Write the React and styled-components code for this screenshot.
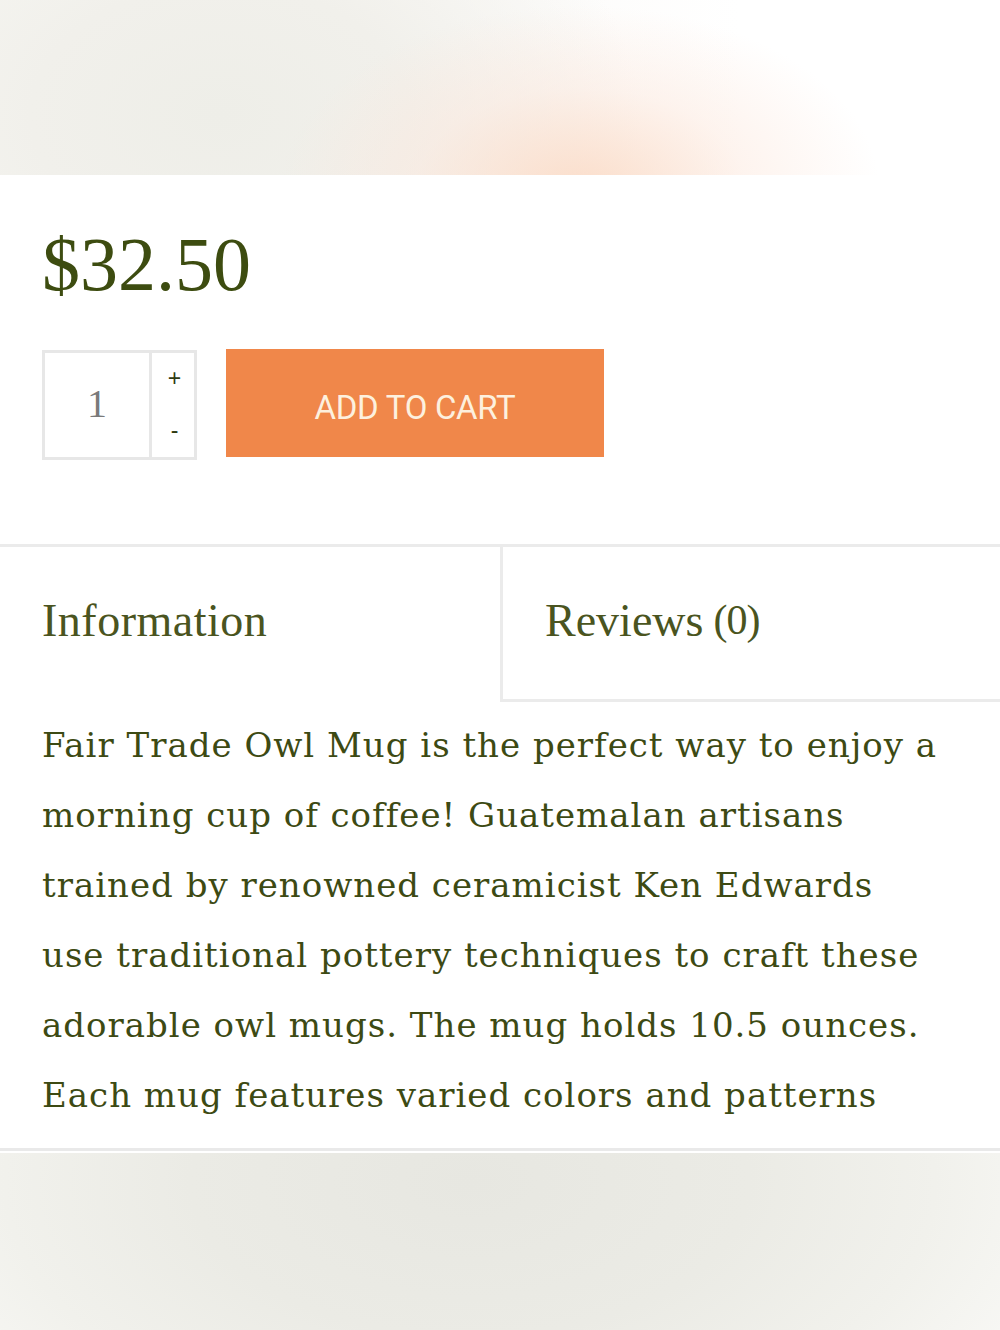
import React from "react";
import styled, { createGlobalStyle } from "styled-components";

const Global = createGlobalStyle`
  html, body { margin: 0; padding: 0; background: #fff; }
  body { font-family: "Liberation Serif", serif; }
  * { box-sizing: border-box; }
`;

const Page = styled.div`
  width: 1000px;
  height: 1330px;
  display: flex;
  flex-direction: column;
  overflow: hidden;
  background: #fff;
`;

const Hero = styled.div`
  height: 175px;
  flex: none;
  background:
    radial-gradient(ellipse 300px 185px at 580px 190px, rgba(251, 220, 200, 0.95), rgba(252, 230, 218, 0.45) 55%, rgba(255, 255, 255, 0) 100%),
    radial-gradient(ellipse 420px 290px at 220px 115px, #eeeee8 0%, #f1f0eb 45%, rgba(248, 247, 244, 0) 100%),
    linear-gradient(90deg, #f7f7f3 0%, #fbfaf8 45%, #ffffff 74%);
`;

const Main = styled.div`
  padding: 51px 42px 0;
`;

const Price = styled.div`
  font-family: "Liberation Serif", serif;
  font-size: 76px;
  line-height: 76px;
  color: #3d4c10;
`;

const BuyRow = styled.div`
  display: flex;
  align-items: flex-start;
  gap: 29px;
  margin-top: 47px;
`;

const Qty = styled.div`
  display: flex;
  width: 155px;
  height: 110px;
  border: 3px solid #e7e7e7;
  margin-top: 1px;
`;

const QtyValue = styled.div`
  width: 107px;
  border-right: 3px solid #e7e7e7;
  display: flex;
  align-items: center;
  justify-content: center;
  padding-bottom: 4px;
  font-family: "Liberation Serif", serif;
  font-size: 40px;
  color: #7a7a7a;
`;

const Stepper = styled.div`
  flex: 1;
  display: flex;
  flex-direction: column;
  align-items: center;
  justify-content: space-between;
  padding: 12px 0 14px 3px;
  font-family: "Liberation Sans", sans-serif;
  font-size: 23px;
  line-height: 26px;
  color: #2f3a10;
`;

const CartButton = styled.button`
  width: 378px;
  height: 108px;
  border: none;
  background: #f0874a;
  color: #fdf0de;
  font-family: Roboto, sans-serif;
  font-size: 33px;
  letter-spacing: -0.3px;
  padding: 8px 0 0;
  cursor: pointer;
`;

const Tabs = styled.div`
  display: flex;
  margin-top: 84px;
  border-top: 3px solid #ebebeb;
`;

const Tab = styled.div`
  flex: ${(p) => (p.$active ? "0 0 500px" : "1")};
  height: 155px;
  display: flex;
  align-items: center;
  padding-left: 42px;
  padding-bottom: 6px;
  font-family: "Liberation Serif", serif;
  font-size: 46px;
  letter-spacing: ${(p) => (p.$active ? "0.5px" : "0")};
  color: #4a5420;
  border-left: ${(p) => (p.$active ? "none" : "3px solid #ebebeb")};
  border-bottom: ${(p) => (p.$active ? "3px solid transparent" : "3px solid #ebebeb")};
`;

const Count = styled.span`
  margin-left: 10px;
  font-size: 42px;
  letter-spacing: -1px;
`;

const Description = styled.div`
  padding: 8px 58px 18px 42px;
  font-family: "DejaVu Serif", serif;
  font-size: 34px;
  letter-spacing: 1px;
  line-height: 70px;
  color: #3d4a13;
  border-bottom: 3px solid #e9e9e9;
`;

const Footer = styled.div`
  flex: 1;
  margin-top: 2px;
  background:
    radial-gradient(ellipse 620px 340px at 470px 30px, #e7e7e1 0%, #ebebe5 45%, #f1f1ec 75%, #f8f8f5 100%);
`;

export default function App() {
  return (
    <Page>
      <Global />
      <Hero />
      <Main>
        <Price>$32.50</Price>
        <BuyRow>
          <Qty>
            <QtyValue>1</QtyValue>
            <Stepper>
              <span>+</span>
              <span>-</span>
            </Stepper>
          </Qty>
          <CartButton>ADD TO CART</CartButton>
        </BuyRow>
      </Main>
      <Tabs>
        <Tab $active>Information</Tab>
        <Tab>
          Reviews
          <Count>(0)</Count>
        </Tab>
      </Tabs>
      <Description>
        Fair Trade Owl Mug is the perfect way to enjoy a morning cup of coffee! Guatemalan artisans
        trained by renowned ceramicist Ken Edwards use traditional pottery techniques to craft these
        adorable owl mugs. The mug holds 10.5 ounces. Each mug features varied colors and patterns
      </Description>
      <Footer />
    </Page>
  );
}
